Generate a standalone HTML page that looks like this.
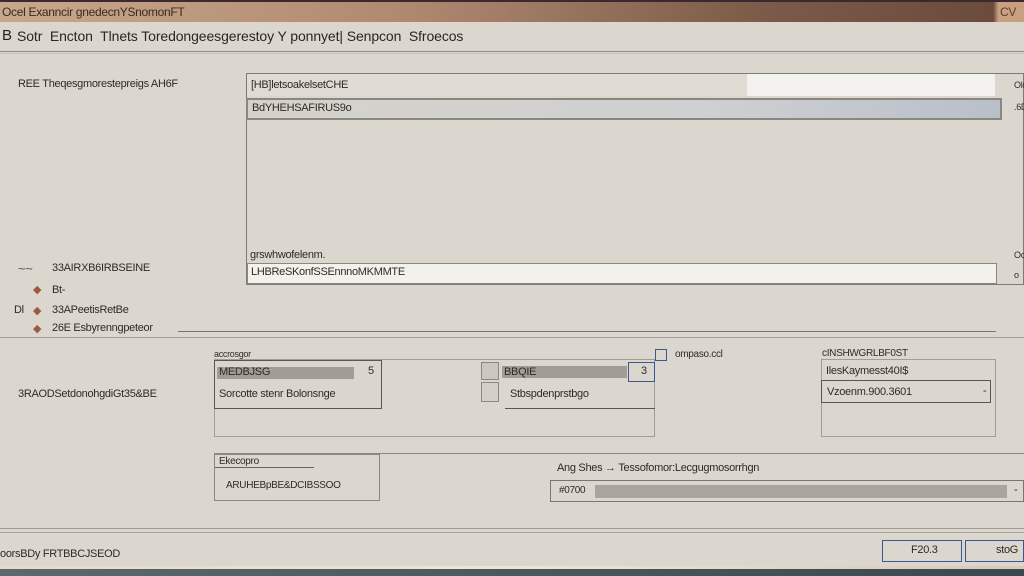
<!DOCTYPE html>
<html><head><meta charset="utf-8"><style>
*{margin:0;padding:0;box-sizing:border-box}
body{width:1024px;height:576px;overflow:hidden;background:#dcd7ce;font-family:"Liberation Sans",sans-serif;color:#333;position:relative}
.a{position:absolute}
.t{font-size:11px;color:#2e2a26;white-space:nowrap;letter-spacing:-0.3px}
.box{position:absolute;border:1px solid #8c8880}
.hl{position:absolute;height:1px;background:#9a968e}
</style></head><body>
<div class="a" style="left:0;top:0;width:1024px;height:22px;background:linear-gradient(90deg,#c8a88c 0%,#b08870 40%,#7a5a48 75%,#6b4c3c 97%,#c9a080 97.5%,#c8a080 100%)"></div>
<div class="a" style="left:0;top:0;width:1024px;height:2px;background:#3a2a30"></div>
<div class="a t" style="left:2px;top:5px;font-size:12px;color:#3a2a20">Ocel Exanncir gnedecnYSnomonFT</div>
<div class="a t" style="left:1000px;top:5px;font-size:12px;color:#5a4030">CV</div>
<div class="a t" style="left:2px;top:27px;font-size:15px;color:#222">B</div>
<div class="a t" style="left:17px;top:28px;font-size:14px;color:#2a2620;letter-spacing:-0.1px">Sotr&nbsp; Encton&nbsp; Tlnets Toredongeesgerestoy Y ponnyet| Senpcon&nbsp; Sfroecos</div>
<div class="hl" style="left:0;top:51px;width:1024px;background:#8f8b84"></div>
<div class="hl" style="left:0;top:53px;width:1024px;background:#c8c4bc"></div>
<div class="a t" style="left:18px;top:78px">REE Theqesgmorestepreigs AH6F</div>
<div class="box" style="left:246px;top:73px;width:778px;height:212px;border-color:#7e7a74"></div>
<div class="a" style="left:247px;top:74px;width:500px;height:22px;background:#e0dcd4"></div>
<div class="a" style="left:747px;top:74px;width:248px;height:22px;background:#f4f2ee"></div>
<div class="a t" style="left:251px;top:79px">[HB]letsoakelsetCHE</div>
<div class="box" style="left:246px;top:98px;width:756px;height:22px;background:linear-gradient(90deg,#d6d2ca,#cfd0d2 60%,#b9bfc9);border:2px solid #8a8680"></div>
<div class="a t" style="left:252px;top:102px">BdYHEHSAFIRUS9o</div>
<div class="a t" style="left:1014px;top:80px;font-size:9px">Old</div>
<div class="a t" style="left:1014px;top:102px;font-size:9px">.6D</div>
<div class="a t" style="left:250px;top:249px">grswhwofelenm.</div>
<div class="box" style="left:247px;top:263px;width:750px;height:21px;background:#f3f1ec;border-color:#8a8680"></div>
<div class="a t" style="left:251px;top:266px">LHBReSKonfSSEnnnoMKMMTE</div>
<div class="a t" style="left:1014px;top:250px;font-size:9px">Oc</div>
<div class="a t" style="left:1014px;top:270px;font-size:9px">o</div>
<div class="a t" style="left:18px;top:261px;font-size:13px;color:#554">~~</div>
<div class="a t" style="left:52px;top:262px">33AIRXB6IRBSEINE</div>
<div class="a t" style="left:33px;top:283px;color:#9a5a40">◆</div>
<div class="a t" style="left:52px;top:284px">Bt-</div>
<div class="a t" style="left:14px;top:304px">Dl</div>
<div class="a t" style="left:33px;top:304px;color:#9a5a40">◆</div>
<div class="a t" style="left:52px;top:304px">33APeetisRetBe</div>
<div class="a t" style="left:33px;top:322px;color:#9a5a40">◆</div>
<div class="a t" style="left:52px;top:322px">26E Esbyrenngpeteor</div>
<div class="hl" style="left:178px;top:331px;width:818px;background:#7a766f"></div>
<div class="hl" style="left:0;top:337px;width:1024px;background:#a29e96"></div>
<div class="a t" style="left:18px;top:388px">3RAODSetdonohgdiGt35&amp;BE</div>
<div class="a t" style="left:214px;top:349px;font-size:9px">accrosgor</div>
<div class="box" style="left:214px;top:359px;width:441px;height:78px;border-color:#a29e96"></div>
<div class="box" style="left:214px;top:360px;width:168px;height:49px;border:1.5px solid #5a5650;background:#dad6ce"></div>
<div class="a" style="left:217px;top:367px;width:137px;height:12px;background:#a09c96"></div>
<div class="a t" style="left:219px;top:366px">MEDBJSG</div>
<div class="a t" style="left:368px;top:365px">5</div>
<div class="a t" style="left:219px;top:388px">Sorcotte stenr Bolonsnge</div>
<div class="box" style="left:481px;top:362px;width:18px;height:18px;background:#ccc8c0"></div>
<div class="box" style="left:481px;top:382px;width:18px;height:20px;background:#d4d0c8"></div>
<div class="a" style="left:502px;top:366px;width:125px;height:12px;background:#a09c96"></div>
<div class="a t" style="left:504px;top:366px">BBQIE</div>
<div class="box" style="left:628px;top:362px;width:27px;height:20px;border:1.5px solid #3b5690"></div>
<div class="a t" style="left:641px;top:365px">3</div>
<div class="a t" style="left:510px;top:388px">Stbspdenprstbgo</div>
<div class="hl" style="left:505px;top:408px;width:150px;background:#5a5650"></div>
<div class="box" style="left:655px;top:349px;width:12px;height:12px;border-color:#3b5690"></div>
<div class="a t" style="left:675px;top:349px;font-size:10px">ompaso.ccl</div>
<div class="a t" style="left:822px;top:348px;font-size:10px">cINSHWGRLBF0ST</div>
<div class="box" style="left:821px;top:359px;width:175px;height:78px;border-color:#a29e96"></div>
<div class="a t" style="left:826px;top:365px">IlesKaymesst40I$</div>
<div class="box" style="left:821px;top:380px;width:170px;height:23px;border:1.5px solid #5a5650"></div>
<div class="a t" style="left:827px;top:386px">Vzoenm.900.3601</div>
<div class="a t" style="left:983px;top:385px">-</div>
<div class="hl" style="left:214px;top:453px;width:810px;background:#8a8680"></div>
<div class="box" style="left:214px;top:454px;width:166px;height:47px;border-color:#8a8680"></div>
<div class="hl" style="left:215px;top:467px;width:99px;background:#6a665f"></div>
<div class="a t" style="left:219px;top:456px;font-size:10px">Ekecopro</div>
<div class="a t" style="left:226px;top:480px;font-size:10px">ARUHEBpBE&amp;DCIBSSOO</div>
<div class="a t" style="left:557px;top:462px">Ang Shes &#8594; Tessofomor:Lecgugmosorrhgn</div>
<div class="box" style="left:550px;top:480px;width:474px;height:22px;border-color:#7a766f"></div>
<div class="a t" style="left:559px;top:485px;font-size:10px">#0700</div>
<div class="a" style="left:595px;top:485px;width:412px;height:13px;background:#a8a49e"></div>
<div class="a t" style="left:1014px;top:484px">-</div>
<div class="hl" style="left:0;top:528px;width:1024px;background:#9e9a92"></div>
<div class="hl" style="left:0;top:532px;width:1024px;background:#a8a49c"></div>
<div class="a t" style="left:0;top:548px">oorsBDy FRTBBCJSEOD</div>
<div class="box" style="left:882px;top:540px;width:80px;height:22px;border:1.5px solid #3b5690"></div>
<div class="a t" style="left:911px;top:544px">F20.3</div>
<div class="box" style="left:965px;top:540px;width:59px;height:22px;border:1.5px solid #3b5690"></div>
<div class="a t" style="left:996px;top:544px">stoG</div>
<div class="a" style="left:0;top:566px;width:1024px;height:3px;background:linear-gradient(90deg,#e8d8c8,#f0e4d8,#d8c8b8)"></div>
<div class="a" style="left:0;top:569px;width:1024px;height:7px;background:linear-gradient(90deg,#5a6870,#4a5860,#3a4850)"></div>
</body></html>
